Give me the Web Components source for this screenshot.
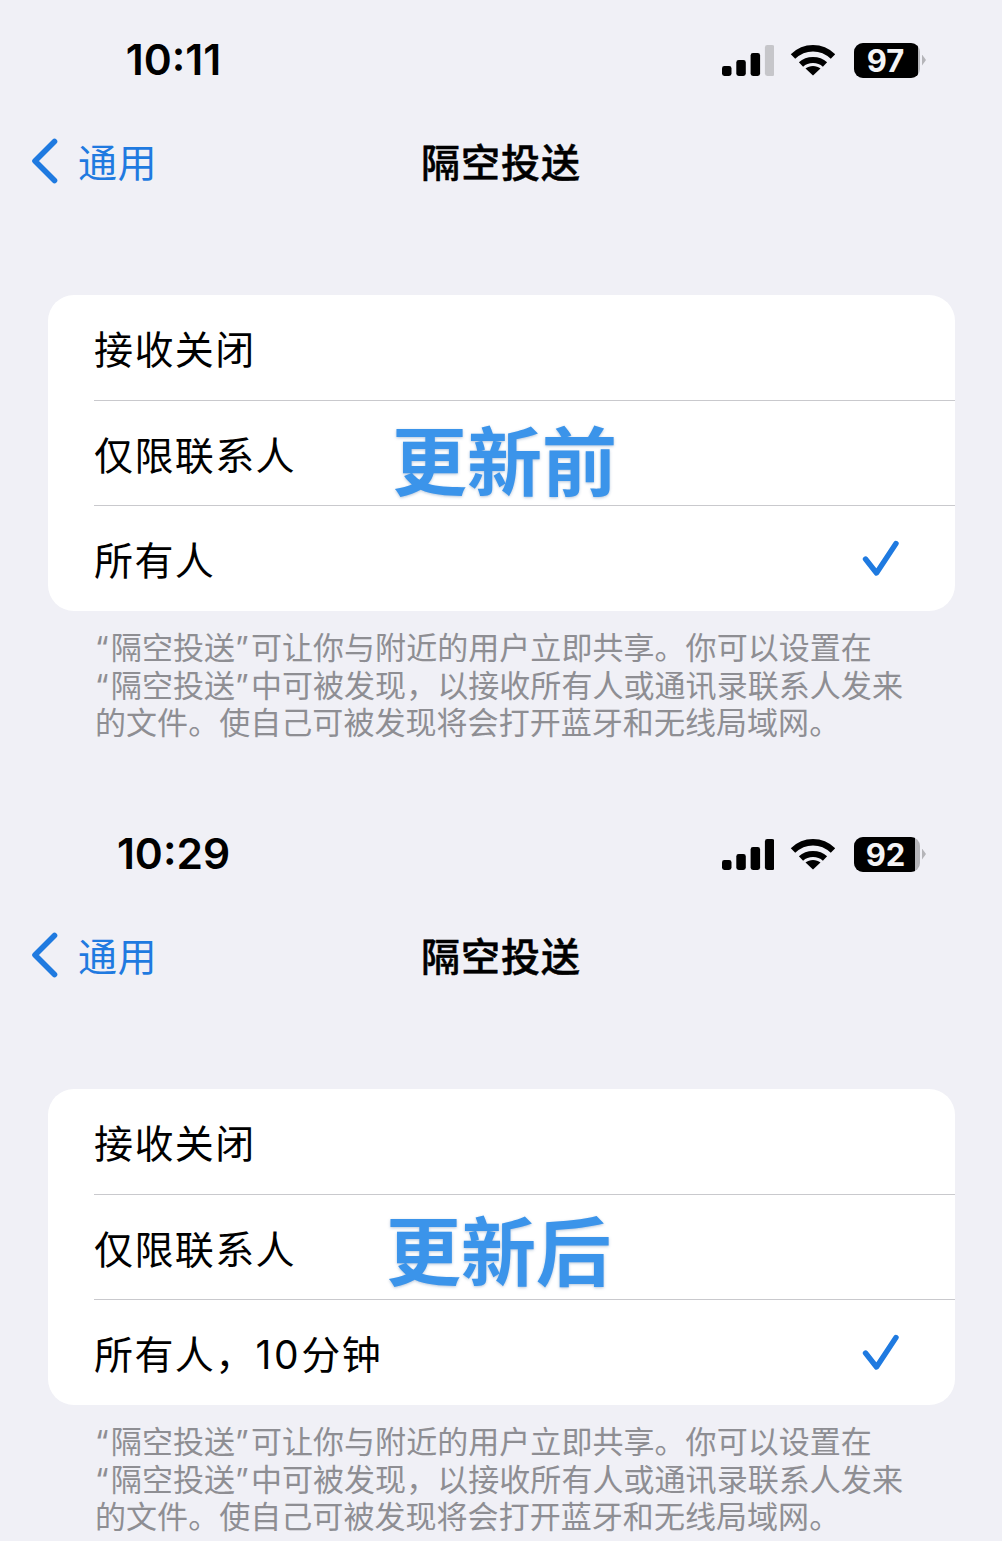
<!doctype html>
<html lang="zh">
<head>
<meta charset="utf-8">
<style>
html,body{margin:0;padding:0;background:#f0f0f6}
body{width:1002px;height:1541px;overflow:hidden;font-family:"Inter","Noto Sans CJK SC",sans-serif}
</style>
</head>
<body>
<airdrop-screen time="10:11" battery="97" fill="97" bars="3" label="更新前" selected="所有人"></airdrop-screen>
<airdrop-screen time="10:29" battery="92" fill="92" bars="4" label="更新后" selected="所有人，10分钟" class="second"></airdrop-screen>
<script>
const CJK='"Noto Sans CJK SC",sans-serif'
const MIXED='"Inter","Noto Sans CJK SC",sans-serif'

class StatusIcons extends HTMLElement{
  connectedCallback(){
    const bars=+this.getAttribute("bars")||4,fill=+this.getAttribute("fill")||100
    const hs=[10,16,23,31]
    const barHtml=hs.map((h,i)=>`<rect x="${i*14.3}" y="${31-h}" width="9.5" height="${h}" rx="2.4" fill="${i<bars?"#000":"#c6c6ca"}"/>`).join("")
    this.attachShadow({mode:"open"}).innerHTML=`
    <style>
      :host{display:flex;align-items:center}
      svg{display:block}
      .sig{margin-right:16px;margin-top:1px}
      .wifi{margin-right:18px;margin-top:-1px}
      .bat{position:relative;width:66px;height:35px;border-radius:9px;overflow:hidden;background:#b5b5b9;display:flex}
      .lvl{position:absolute;left:0;top:0;bottom:0;background:#000;width:${fill}%}
      .num{position:relative;width:100%;padding-right:3px;box-sizing:border-box;text-align:center;color:#f4f4f6;font:700 31px/35px "Inter",sans-serif}
      .tip{width:4px;height:11px;margin-left:2px;background:#b5b5b9;clip-path:polygon(0 0,100% 50%,0 100%)}
    </style>
    <svg class="sig" width="52" height="31" viewBox="0 0 52 31">${barHtml}</svg>
    <svg class="wifi" width="46" height="32" viewBox="0 0 46 32" fill="none">
      <path d="M3 12.5C14.5 1.5 31.5 1.5 43 12.5" stroke="#000" stroke-width="6.4" stroke-linecap="butt"/>
      <path d="M11 20.5C17.5 14.5 28.5 14.5 35 20.5" stroke="#000" stroke-width="6.2"/>
      <path d="M23 31.5L15.5 24.5C19.5 21 26.5 21 30.5 24.5Z" fill="#000"/>
    </svg>
    <div class="bat"><div class="lvl"></div><div class="num">${this.getAttribute("value")}</div></div>
    <div class="tip"></div>`
  }
}
customElements.define("status-icons",StatusIcons)

class StatusBar extends HTMLElement{
  connectedCallback(){
    const t=this.getAttribute("time")
    this.attachShadow({mode:"open"}).innerHTML=`
    <style>
      :host{display:flex;align-items:center;justify-content:space-between;height:44px;padding:0 76px 0 0}
      .time{width:347px;text-align:center;font:600 42.5px/44px "Inter",sans-serif;color:#000}
    </style>
    <div class="time">${t}</div>
    <status-icons bars="${this.getAttribute("bars")}" fill="${this.getAttribute("fill")}" value="${this.getAttribute("battery")}"></status-icons>`
  }
}
customElements.define("status-bar",StatusBar)

class NavBar extends HTMLElement{
  connectedCallback(){
    this.attachShadow({mode:"open"}).innerHTML=`
    <style>
      :host{display:grid;grid-template-columns:1fr auto 1fr;align-items:center;height:48px;font-family:${CJK}}
      .back{display:flex;align-items:center;padding-left:31px;color:#1f7ae0;font-size:39px;line-height:48px;letter-spacing:.5px}
      svg{display:block;margin:2px 20px 0 0}
      h1{margin:0;font-size:39px;line-height:48px;font-weight:500;-webkit-text-stroke:.5px #000;color:#000;letter-spacing:1px}
    </style>
    <div class="back"><svg width="27" height="46" viewBox="0 0 27 46" fill="none"><path d="M23.5 3.5L4 23L23.5 42.5" stroke="#1f7ae0" stroke-width="5.6" stroke-linecap="round" stroke-linejoin="round"/></svg><span>通用</span></div>
    <h1>隔空投送</h1><div></div>`
  }
}
customElements.define("nav-bar",NavBar)

class OptionRow extends HTMLElement{
  connectedCallback(){
    const on=this.hasAttribute("checked")
    this.attachShadow({mode:"open"}).innerHTML=`
    <style>
      :host{display:flex;align-items:center;justify-content:space-between;height:105px;margin-left:46px;padding-right:55px;box-sizing:border-box;border-top:1px solid #c9c9cd;font:400 39px/1 ${MIXED};color:#000;letter-spacing:1.4px}
      :host(:first-child){border-top:0}
      span{padding-top:4px}
      svg{display:block;margin-top:2px}
    </style>
    <span><slot></slot></span>
    ${on?`<svg width="38" height="38" viewBox="0 0 38 38" fill="none"><path d="M3.5 19L14.5 33L34 3.5" stroke="#1f7ae0" stroke-width="5.4" stroke-linecap="round" stroke-linejoin="round"/></svg>`:""}`
  }
}
customElements.define("option-row",OptionRow)

class AirdropScreen extends HTMLElement{
  connectedCallback(){
    const a=n=>this.getAttribute(n)
    const second=this.classList.contains("second")
    const sel=a("selected").replace(/\d+/,m=>`<b>${m}</b>`)
    const quoted=s=>s.replace(/[“”]/g,m=>`<i>${m}</i>`)
    this.attachShadow({mode:"open"}).innerHTML=`
    <style>
      :host{display:block;height:794px;padding-top:38px;box-sizing:border-box}
      nav-bar{margin-top:54px}
      .card{position:relative;margin:111px 47px 0 48px;padding-bottom:1px;background:#fff;border-radius:26px;overflow:hidden}
      .card b{font-weight:400;letter-spacing:2.6px}
      .stamp{position:absolute;left:${second?338:344}px;top:${second?117:121}px;font:700 75px/84px ${CJK};color:#3b94ea;text-shadow:0 1px 3px rgba(40,90,150,.35)}
      p{margin:18px 0 0 95px;font:400 31px/37.5px ${MIXED};color:#8e8e93;letter-spacing:.05px}
      p span{display:block;white-space:nowrap}
      p i{font-style:normal;letter-spacing:2.2px}
    </style>
    <status-bar time="${a("time")}" battery="${a("battery")}" fill="${a("fill")}" bars="${a("bars")}"></status-bar>
    <nav-bar></nav-bar>
    <div class="card">
      <option-row>接收关闭</option-row>
      <option-row>仅限联系人</option-row>
      <option-row checked>${sel}</option-row>
      <div class="stamp">${a("label")}</div>
    </div>
    <p><span>${quoted("“隔空投送”可让你与附近的用户立即共享。你可以设置在")}</span><span>${quoted("“隔空投送”中可被发现，以接收所有人或通讯录联系人发来")}</span><span>的文件。使自己可被发现将会打开蓝牙和无线局域网。</span></p>`
  }
}
customElements.define("airdrop-screen",AirdropScreen)
</script>
</body>
</html>
